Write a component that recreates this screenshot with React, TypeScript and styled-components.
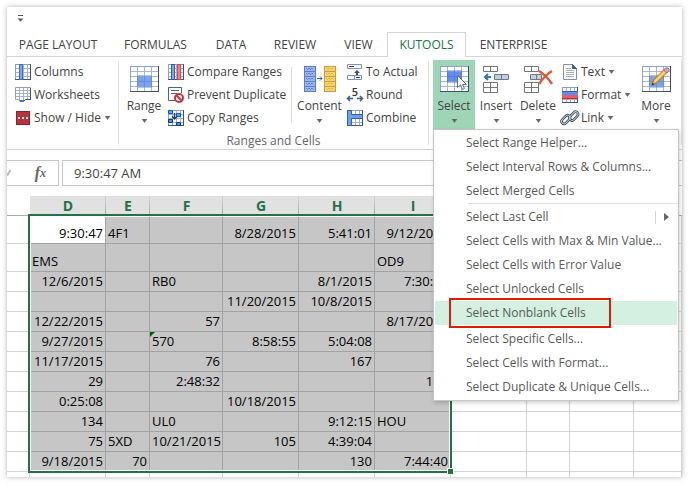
import React from "react";
import styled, { createGlobalStyle } from "styled-components";

const GlobalStyle = createGlobalStyle`
  * { box-sizing: border-box; }
  body { margin: 0; background: #fff; }
  button, input { font: inherit; color: inherit; }
`;

const GREEN = "#217346";
const UI_FONT = `"Open Sans", "Noto Sans", sans-serif`;
const SHEET_FONT = `"Open Sans", "Noto Sans", sans-serif`;

const AppWindow = styled.main`
  margin: 7px;
  background: #fff;
  color: #444;
  font: 12px/16px ${UI_FONT};
  box-shadow: 0 0 5px rgba(0, 0, 0, 0.3);
`;

const TitleBar = styled.header`
  height: 25px;
  padding: 8px 10px;
  display: flex;
`;

const PlainButton = styled.button`
  border: 0;
  padding: 0;
  background: transparent;
  display: flex;
  white-space: nowrap;
`;

const TabBar = styled.nav`
  display: flex;
  height: 25px;
  box-shadow: inset 0 -1px #d4d4d4;
`;

const Tab = styled.button<{ $width: number; $active?: boolean }>`
  width: ${(p) => p.$width}px;
  padding: 0;
  border: 1px solid ${(p) => (p.$active ? "#d4d4d4" : "transparent")};
  border-bottom: 0;
  background: ${(p) => (p.$active ? "#fff" : "transparent")};
  color: ${(p) => (p.$active ? GREEN : "#444")};
  white-space: nowrap;
`;

const Ribbon = styled.section`
  display: flex;
  padding-top: 3px;
  height: 93px;
  border-bottom: 1px solid #d4d4d4;
`;

const Group = styled.div<{ $width?: number }>`
  width: ${(p) => (p.$width ? p.$width + "px" : "auto")};
  flex: ${(p) => (p.$width ? "none" : "1")};
`;

const Tools = styled.div<{ $inset: number }>`
  display: flex;
  height: 69px;
  padding-left: ${(p) => p.$inset}px;
`;

const GroupLabel = styled.div`
  padding-top: 4px;
  text-align: center;
  color: #666;
`;

const Divider = styled.span<{ $short?: boolean }>`
  flex: none;
  width: 1px;
  height: ${(p) => (p.$short ? 56 : 84)}px;
  margin-top: ${(p) => (p.$short ? 7 : 1)}px;
  background: #e1e1e1;
`;

const BigButton = styled(PlainButton)<{ $width: number; $active?: boolean }>`
  flex: none;
  flex-direction: column;
  align-items: center;
  width: ${(p) => p.$width}px;
  height: 69px;
  padding-top: 6px;
  background: ${(p) => (p.$active ? "#9fd5b7" : "transparent")};
`;

const BigLabel = styled.span`
  margin: 6px 0 5px;
`;

const ToolColumn = styled.div<{ $width: number }>`
  flex: none;
  width: ${(p) => p.$width}px;
`;

const SmallButton = styled(PlainButton)`
  height: 23px;
  align-items: center;
  gap: 3px;
`;

const MenuAnchor = styled.div`
  position: relative;
`;

const Menu = styled.div`
  position: absolute;
  z-index: 5;
  top: 100%;
  left: 0;
  width: 246px;
  padding: 1px;
  border: 1px solid #c6c6c6;
  background: #fff;
  box-shadow: 1px 2px 4px rgba(0, 0, 0, 0.18);
`;

const MenuItem = styled.button<{ $active?: boolean }>`
  display: flex;
  align-items: center;
  width: 100%;
  height: 24px;
  border: 0;
  padding: 0 8px 0 31px;
  color: #5a5a5a;
  background: ${(p) => (p.$active ? "#d3f0e0" : "transparent")};
  white-space: nowrap;
`;

const ItemLabel = styled.span`
  flex: 1;
  text-align: left;
`;

const SubmenuMark = styled.span`
  display: flex;
  align-items: center;
  height: 13px;
  padding-left: 8px;
  border-left: 1px solid #d4d4d4;
`;

const MenuRule = styled.hr<{ $clear?: boolean }>`
  height: ${(p) => (p.$clear ? 2 : 1)}px;
  margin: 0 0 ${(p) => (p.$clear ? 0 : 1)}px 33px;
  border: 0;
  background: ${(p) => (p.$clear ? "transparent" : "#e1e1e1")};
`;

const ItemWrap = styled.div`
  position: relative;
`;

const Highlight = styled.span`
  position: absolute;
  top: -3px;
  left: 14px;
  width: 162px;
  height: 30px;
  border: 2px solid #e21b00;
  pointer-events: none;
`;

const FormulaRow = styled.div`
  display: flex;
  gap: 3px;
  padding: 10px 0;
`;

const FormulaTools = styled.div`
  display: flex;
  align-items: center;
  justify-content: space-between;
  width: 52px;
  height: 26px;
  padding-right: 12px;
  border: 1px solid #c6c6c6;
  border-left: 0;
`;

const FxButton = styled(PlainButton)`
  font: italic bold 16px/20px "Liberation Serif", serif;
  color: #666;
`;

const Subscript = styled.span`
  font-size: 12px;
`;

const FormulaInput = styled.input`
  flex: 1;
  min-width: 0;
  height: 26px;
  padding: 0 11px;
  border: 1px solid #c6c6c6;
  border-right: 0;
  outline: 0;
  font: 13px/20px ${SHEET_FONT};
`;

const Sheet = styled.section`
  position: relative;
  overflow: hidden;
`;

const Grid = styled.table`
  width: 100%;
  table-layout: fixed;
  border-collapse: separate;
  border-spacing: 0;
  font: 13px/19px ${SHEET_FONT};
  color: #000;
`;

const Col = styled.col<{ $width?: number }>`
  width: ${(p) => (p.$width ? p.$width + "px" : "auto")};
`;

const HeadCell = styled.th<{ $on?: boolean }>`
  height: 20px;
  padding: 0;
  border-bottom: 1px solid #ababab;
  background: ${(p) =>
    p.$on ? "linear-gradient(#d4d4d4, #a8a8a8) right / 1px 100% no-repeat #e1e1e1" : "#fff"};
  color: ${GREEN};
  font-size: 14px;
`;

const Cell = styled.td<{ $tall?: boolean; $on?: boolean; $current?: boolean; $end?: boolean; $marked?: boolean }>`
  height: ${(p) => (p.$tall ? 28 : 20)}px;
  padding: 0 2px;
  border: 0 solid ${(p) => (p.$on ? "#a3a3a3" : "#d4d4d4")};
  border-width: 0 1px 1px 0;
  background: ${(p) =>
    p.$current
      ? "#fff"
      : p.$marked
        ? "linear-gradient(135deg, #006400 3px, transparent 4px) #c6c6c6"
        : p.$on
          ? "#c6c6c6"
          : "#fff"};
  text-align: ${(p) => (p.$end ? "right" : "left")};
  vertical-align: bottom;
  white-space: nowrap;
`;

const TailCell = styled.td`
  height: 5px;
  padding: 0;
  border-right: 1px solid #d4d4d4;
`;

const Selection = styled.div`
  position: absolute;
  top: 18px;
  bottom: 4px;
  left: 21px;
  width: 424px;
  border: 2px solid ${GREEN};
  box-shadow: inset 0 0 0 1px #fff;
  pointer-events: none;
`;

const FillHandle = styled.span`
  position: absolute;
  right: -4px;
  bottom: -4px;
  width: 7px;
  height: 7px;
  border: 1px solid #fff;
  background: ${GREEN};
`;

const Arrow = () => (
  <svg width="7" height="4" viewBox="0 0 7 4" aria-hidden="true">
    <path d="M1 0h5L3.5 3.5z" fill="#666" stroke="#666" strokeWidth=".5" />
  </svg>
);

/* Small 16px icons share a grid sheet as a base. */
const GridBase = () => (
  <>
    <rect x="0.5" y="0.5" width="15" height="15" fill="#fff" stroke="#8ea0ba" />
    <path d="M4.5 1v14M8.5 1v14M12.5 1v14M1 4.5h14M1 8.5h14M1 12.5h14" stroke="#a5b3c8" fill="none" />
    <path d="M15.5 0v16M0 15.5h16" stroke="#3c5475" fill="none" />
  </>
);

const Icon = ({ children }: { children: React.ReactNode }) => (
  <svg width="16" height="16" viewBox="0 0 16 16" overflow="visible" aria-hidden="true" fill="none">
    {children}
  </svg>
);

const ColumnsIcon = () => (
  <Icon>
    <GridBase />
    <rect x="4.5" y="0.5" width="3" height="15" fill="#78a6f5" stroke="#3a6cc8" />
  </Icon>
);
const WorksheetsIcon = () => (
  <Icon>
    <path d="M.5.5h15v12h-5l-2 2h-3l-2-2h-3z" fill="#fff" stroke="#8ea0ba" />
    <path d="M4.5 1v12M8.5 1v12M12.5 1v11M1 3.5h14M1 6.5h14M1 9.5h14" stroke="#a5b3c8" />
    <path d="M15.5 1v11.5h-5l-2 2" stroke="#3c5475" />
    <path d="M4 13h6l-2 2H5z" fill="#2e78dc" />
  </Icon>
);
const ShowHideIcon = () => (
  <Icon>
    <rect x="1.5" y="1.5" width="13" height="13" fill="#b0353f" stroke="#8f222d" />
    <path d="M3 7h2v2H3zM7 7h2v2H7zM11 7h2v2h-2z" fill="#f6dede" />
  </Icon>
);
const CompareIcon = () => (
  <Icon>
    <GridBase />
    <rect x="3.5" y="0.5" width="3" height="15" fill="#78a6f5" stroke="#2d5db9" />
    <rect x="9.5" y="0.5" width="3" height="15" fill="#f0808a" stroke="#d54450" />
  </Icon>
);
const PreventIcon = () => (
  <Icon>
    <path d="M8 13.500H.5V.5h13V6" fill="#fff" stroke="#4d617d" />
    <path d="M3 3.500h8M3 6.500h6" stroke="#56657a" />
    <circle cx="11" cy="11" r="4" fill="#fff" stroke="#c8333b" strokeWidth="2" />
    <path d="M8.200 8.200l5.600 5.600" stroke="#c8333b" strokeWidth="2" />
  </Icon>
);
const CopyIcon = () => (
  <Icon>
    <GridBase />
    <path d="M.5.5h4v3h-4zM8.500 3.500h4v3h-4z" fill="#6ba4ff" stroke="#0055ea" />
    <path d="M.5 9.500h4v3h-4zM8.500 12.500h4v3h-4z" fill="#5b8fd8" stroke="#003a8c" />
    <path d="M6.500 3v6M4 6.500L6.500 9 9 6.500" stroke="#244060" strokeWidth="1.500" />
  </Icon>
);
const ActualIcon = () => (
  <Icon>
    <path d="M.5.5h14v4H.5zM.5 11.500h14v4H.5zM7.500 11.500v4" fill="#fff" stroke="#7c93b8" />
    <path d="M2 2.500h4" stroke="#d00010" />
    <path d="M6 2.500h1M9 13.500h4" stroke="#1238c0" />
    <path d="M10 6l3 3h-2v2H9V9H7z" fill="#35506c" />
  </Icon>
);
const RoundIcon = () => (
  <Icon>
    <text x="8" y="9" textAnchor="middle" fontSize="11" fontWeight="600" fill="#333">5</text>
    <path d="M0 11.500h6M3 9l-2.500 2.500L3 14M10 11.500h6M13 9l2.500 2.500L13 14" stroke="#35608c" strokeWidth="1.500" />
  </Icon>
);
const CombineIcon = () => (
  <Icon>
    <GridBase />
    <path d="M.5.5h4v4h11v4h-11v7h-4z" fill="#6f9ff0" stroke="#2c5fc0" />
  </Icon>
);
const TextIcon = () => (
  <Icon>
    <path d="M1.500.5h9l4 4v11h-13z" fill="#fff" stroke="#7d93ad" />
    <path d="M10.500.5v4h4z" fill="#44607f" stroke="#44607f" />
    <path d="M4 4.500h5M4 6.500h8M4 8.500h8M4 10.500h8M4 12.500h8" stroke="#a3b4c8" />
  </Icon>
);
const FormatIcon = () => (
  <Icon>
    <GridBase />
    <rect y="4" width="16" height="4" fill="#5b8df0" />
    <rect y="8" width="16" height="4" fill="#ee5963" />
    <path d="M0 4.500h16" stroke="#2a5bc8" />
    <path d="M0 11.500h16" stroke="#c42b35" />
  </Icon>
);
const LinkIcon = () => (
  <Icon>
    <g transform="rotate(-47 8 8)">
      <rect x="-1" y="3.500" width="10" height="5" rx="2.500" stroke="#34465c" strokeWidth="2.500" />
      <rect x="7" y="7" width="10" height="5" rx="2.500" stroke="#34465c" strokeWidth="2.500" />
      <rect x="-1" y="3.500" width="10" height="5" rx="2.500" stroke="#b8c6d6" />
      <rect x="7" y="7" width="10" height="5" rx="2.500" stroke="#b8c6d6" />
    </g>
  </Icon>
);

const Pointer = () => <path d="M17.500 9.500v12l3-2.500 2 4.500 2-1-2-4h4z" fill="#fff" stroke="#58708e" />;
const Pencil = () => (
  <>
    <path d="M10 19l1.500-5L22 3.500l3 3L14.500 17z" fill="#f7b73a" stroke="#b87412" />
    <path d="M13 15.500L23 5.500" stroke="#ffe08a" strokeWidth="1.500" />
    <path d="M21.500 4l2-2h2.500l1 1v2l-2 2z" fill="#dc9ad0" stroke="#a36a9c" />
    <path d="M9.500 19.500l1-3 2 2z" fill="#333" />
  </>
);

const BigGrid = ({ children }: { children?: React.ReactNode }) => (
  <svg width="29" height="26" viewBox="0 0 29 26" fill="none" aria-hidden="true">
    <rect x="0.5" y="0.5" width="28" height="25" fill="#fff" stroke="#8ea2c4" />
    <path d="M7 10h15v11H7z" fill="#7ba3ec" />
    <path d="M7.500 1v24M14.500 1v24M21.500 1v24M1 5.500h27M1 10.500h27M1 15.500h27M1 20.500h27" stroke="#a9b8d2" />
    <path d="M7.500 10v11h14V10zM14.500 10v11M7 15.500h15" stroke="#668fdc" />
    <path d="M28.500 0v25.500H0" stroke="#3a506e" />
    {children}
  </svg>
);

const SelectGrid = () => (
  <svg width="29" height="26" viewBox="0 0 29 26" fill="none" aria-hidden="true">
    <rect x="0.5" y="0.5" width="28" height="25" fill="#fff" stroke="#8ea2c4" />
    <path d="M7 5h15v11H7z" fill="#5f8df0" />
    <path d="M7.500 1v24M14.500 1v24M21.500 1v24M1 5.500h27M1 10.500h27M1 15.500h27M1 20.500h27" stroke="#a9b8d2" />
    <path d="M7.500 5v11h14V5zM14.500 5v11M7 10.500h15" stroke="#5180df" />
    <path d="M28.500 0v25.500H0" stroke="#3a506e" />
    <Pointer />
  </svg>
);

const ContentBlock = ({ x, fill, line, zig }: { x: number; fill: string; line: string; zig: string }) => (
  <g transform={`translate(${x} 0)`}>
    <rect x="0.5" y="0.5" width="11" height="25" fill={fill} stroke={line} />
    <path d="M1 5.500h10M1 10.500h10M1 15.500h10M1 20.500h10" stroke={line} />
    {[2, 7, 12, 17, 22].map((y) => (
      <path key={y} d={`M2 ${y}l1.500 1.500L5 ${y}l1.500 1.500L8 ${y}l1.500 1.500`} stroke={zig} strokeWidth=".8" />
    ))}
  </g>
);

const ContentIcon = () => (
  <svg width="32" height="26" viewBox="0 0 32 26" fill="none" aria-hidden="true">
    <ContentBlock x={0} fill="#9cb8f5" line="#5c7ec8" zig="#4d72cc" />
    <ContentBlock x={20} fill="#ffd766" line="#c79a50" zig="#e8a92a" />
    <path d="M13 12.500h5M16 10.500l2 2-2 2" stroke="#365fae" />
  </svg>
);

const TableBits = () => (
  <path d="M.5.5h14v5H.5zM7.500.5v5M.5 16.500h14v10H.5zM7.500 16.500v10M.5 21.500h14" fill="#fff" stroke="#777" />
);
const InsertIcon = () => (
  <svg width="26" height="26" viewBox="0 0 26 26" overflow="visible" fill="none" aria-hidden="true">
    <TableBits />
    <path d="M11.500 8.500h14v5h-14zM18.500 8.500v5" fill="#bcd0e8" stroke="#777" />
    <path d="M8 11H2M5 8l-3 3 3 3" stroke="#2f76b5" strokeWidth="2" />
  </svg>
);
const DeleteIcon = () => (
  <svg width="29" height="26" viewBox="0 0 29 26" overflow="visible" fill="none" aria-hidden="true">
    <TableBits />
    <path d="M6.500 8.500h11v5h-11zM12.500 8.500v5" fill="#bcd0e8" stroke="#777" />
    <path d="M15 5q7 4 13 13M28 5q-7 4-13 13" stroke="#dc5a3a" strokeWidth="2.500" />
  </svg>
);

const Big = ({ width, label, icon, active }: { width: number; label: string; icon: React.ReactNode; active?: boolean }) => (
  <BigButton $width={width} $active={active} aria-haspopup="menu" aria-expanded={!!active}>
    {icon}
    <BigLabel>{label}</BigLabel>
    <Arrow />
  </BigButton>
);

const Small = ({ label, icon, drop }: { label: string; icon: React.ReactNode; drop?: boolean }) => (
  <SmallButton>
    {icon}
    <span>{label}</span>
    {drop && <Arrow />}
  </SmallButton>
);

const tabs: [string, number][] = [
  ["PAGE LAYOUT", 102],
  ["FORMULAS", 93],
  ["DATA", 58],
  ["REVIEW", 70],
  ["VIEW", 57],
  ["KUTOOLS", 79],
  ["ENTERPRISE", 95],
];

const columnWidths = [23, 76, 44, 73, 76, 76, 76, 76, 43, 64];
const letters = ["", "D", "E", "F", "G", "H", "I", "", "", "", ""];

const rows: string[][] = [
  ["9:30:47", "4F1", "", "8/28/2015", "5:41:01", "9/12/2015"],
  ["EMS", "", "", "", "", "OD9"],
  ["12/6/2015", "", "RB0", "", "8/1/2015", "7:30:00"],
  ["", "", "", "11/20/2015", "10/8/2015", ""],
  ["12/22/2015", "", "57", "", "", "8/17/2015"],
  ["9/27/2015", "", "570", "8:58:55", "5:04:08", ""],
  ["11/17/2015", "", "76", "", "167", ""],
  ["29", "", "2:48:32", "", "", "120"],
  ["0:25:08", "", "", "10/18/2015", "", ""],
  ["134", "", "UL0", "", "9:12:15", "HOU"],
  ["75", "5XD", "10/21/2015", "105", "4:39:04", ""],
  ["9/18/2015", "70", "", "", "130", "7:44:40"],
];

const isTextValue = (v: string) => /[A-Z]/.test(v) || v === "570";

const SelectMenu = () => (
  <Menu role="menu">
    <MenuItem role="menuitem"><ItemLabel>Select Range Helper...</ItemLabel></MenuItem>
    <MenuItem role="menuitem"><ItemLabel>Select Interval Rows &amp; Columns...</ItemLabel></MenuItem>
    <MenuItem role="menuitem"><ItemLabel>Select Merged Cells</ItemLabel></MenuItem>
    <MenuRule />
    <MenuItem role="menuitem" aria-haspopup="menu">
      <ItemLabel>Select Last Cell</ItemLabel>
      <SubmenuMark>
        <svg width="5" height="8" viewBox="0 0 5 8" aria-hidden="true"><path d="M0 0v8l5-4z" fill="#666" /></svg>
      </SubmenuMark>
    </MenuItem>
    <MenuItem role="menuitem"><ItemLabel>Select Cells with Max &amp; Min Value...</ItemLabel></MenuItem>
    <MenuItem role="menuitem"><ItemLabel>Select Cells with Error Value</ItemLabel></MenuItem>
    <MenuItem role="menuitem"><ItemLabel>Select Unlocked Cells</ItemLabel></MenuItem>
    <ItemWrap>
      <MenuItem role="menuitem" $active><ItemLabel>Select Nonblank Cells</ItemLabel></MenuItem>
      <Highlight />
    </ItemWrap>
    <MenuRule $clear />
    <MenuItem role="menuitem"><ItemLabel>Select Specific Cells...</ItemLabel></MenuItem>
    <MenuItem role="menuitem"><ItemLabel>Select Cells with Format...</ItemLabel></MenuItem>
    <MenuItem role="menuitem"><ItemLabel>Select Duplicate &amp; Unique Cells...</ItemLabel></MenuItem>
  </Menu>
);

export default function App() {
  return (
    <>
      <GlobalStyle />
      <AppWindow>
        <TitleBar>
          <PlainButton aria-label="Customize Quick Access Toolbar">
            <svg width="7" height="7" viewBox="0 0 7 7" aria-hidden="true">
              <path d="M1 .5h5" stroke="#555" />
              <path d="M.5 3.500h6L3.500 6.500z" fill="#555" />
            </svg>
          </PlainButton>
        </TitleBar>
        <TabBar>
          {tabs.map(([name, width]) => (
            <Tab key={name} $width={width} $active={name === "KUTOOLS"}>{name}</Tab>
          ))}
        </TabBar>
        <Ribbon>
          <Group $width={111}>
            <Tools $inset={8}>
              <ToolColumn $width={96}>
                <Small label="Columns" icon={<ColumnsIcon />} />
                <Small label="Worksheets" icon={<WorksheetsIcon />} />
                <Small label="Show / Hide" icon={<ShowHideIcon />} drop />
              </ToolColumn>
            </Tools>
          </Group>
          <Divider />
          <Group $width={309}>
            <Tools $inset={4}>
              <Big width={42} label="Range" icon={<BigGrid />} />
              <Tools $inset={3}>
                <ToolColumn $width={123}>
                  <Small label="Compare Ranges" icon={<CompareIcon />} />
                  <Small label="Prevent Duplicate" icon={<PreventIcon />} />
                  <Small label="Copy Ranges" icon={<CopyIcon />} />
                </ToolColumn>
              </Tools>
              <Divider $short />
              <Big width={55} label="Content" icon={<ContentIcon />} />
              <ToolColumn $width={80}>
                <Small label="To Actual" icon={<ActualIcon />} />
                <Small label="Round" icon={<RoundIcon />} />
                <Small label="Combine" icon={<CombineIcon />} />
              </ToolColumn>
            </Tools>
            <GroupLabel>Ranges and Cells</GroupLabel>
          </Group>
          <Divider />
          <Group>
            <Tools $inset={4}>
              <MenuAnchor>
                <Big width={42} label="Select" icon={<SelectGrid />} active />
                <SelectMenu />
              </MenuAnchor>
              <Big width={42} label="Insert" icon={<InsertIcon />} />
              <Big width={42} label="Delete" icon={<DeleteIcon />} />
              <Tools $inset={3}>
                <ToolColumn $width={73}>
                  <Small label="Text" icon={<TextIcon />} drop />
                  <Small label="Format" icon={<FormatIcon />} drop />
                  <Small label="Link" icon={<LinkIcon />} drop />
                </ToolColumn>
              </Tools>
              <Big width={42} label="More" icon={<BigGrid><Pencil /></BigGrid>} />
            </Tools>
          </Group>
          <Divider />
        </Ribbon>
        <FormulaRow>
          <FormulaTools>
            <svg width="5" height="8" viewBox="0 0 5 8" aria-hidden="true">
              <path d="M0 6.500L3.500 1" stroke="#b5b5b5" strokeWidth="2" />
            </svg>
            <FxButton aria-label="Insert Function">f<Subscript>x</Subscript></FxButton>
          </FormulaTools>
          <FormulaInput aria-label="Formula" defaultValue="9:30:47 AM" />
        </FormulaRow>
        <Sheet>
          <Grid>
            <colgroup>
              {columnWidths.map((w, i) => <Col key={i} $width={w} />)}
              <Col />
            </colgroup>
            <thead>
              <tr>
                {letters.map((l, i) => <HeadCell key={i} $on={!!l}>{l}</HeadCell>)}
              </tr>
            </thead>
            <tbody>
              {rows.map((row, r) => (
                <tr key={r}>
                  <Cell $tall={r < 2} />
                  {row.map((v, c) => (
                    <Cell
                      key={c}
                      $tall={r < 2}
                      $on
                      $current={r === 0 && c === 0}
                      $marked={v === "570"}
                      $end={!isTextValue(v)}
                    >
                      {v}
                    </Cell>
                  ))}
                  {[0, 1, 2, 3].map((c) => <Cell key={c + 6} $tall={r < 2} />)}
                </tr>
              ))}
              <tr>
                {letters.map((_, i) => <TailCell key={i} />)}
              </tr>
            </tbody>
          </Grid>
          <Selection><FillHandle /></Selection>
        </Sheet>
      </AppWindow>
    </>
  );
}
